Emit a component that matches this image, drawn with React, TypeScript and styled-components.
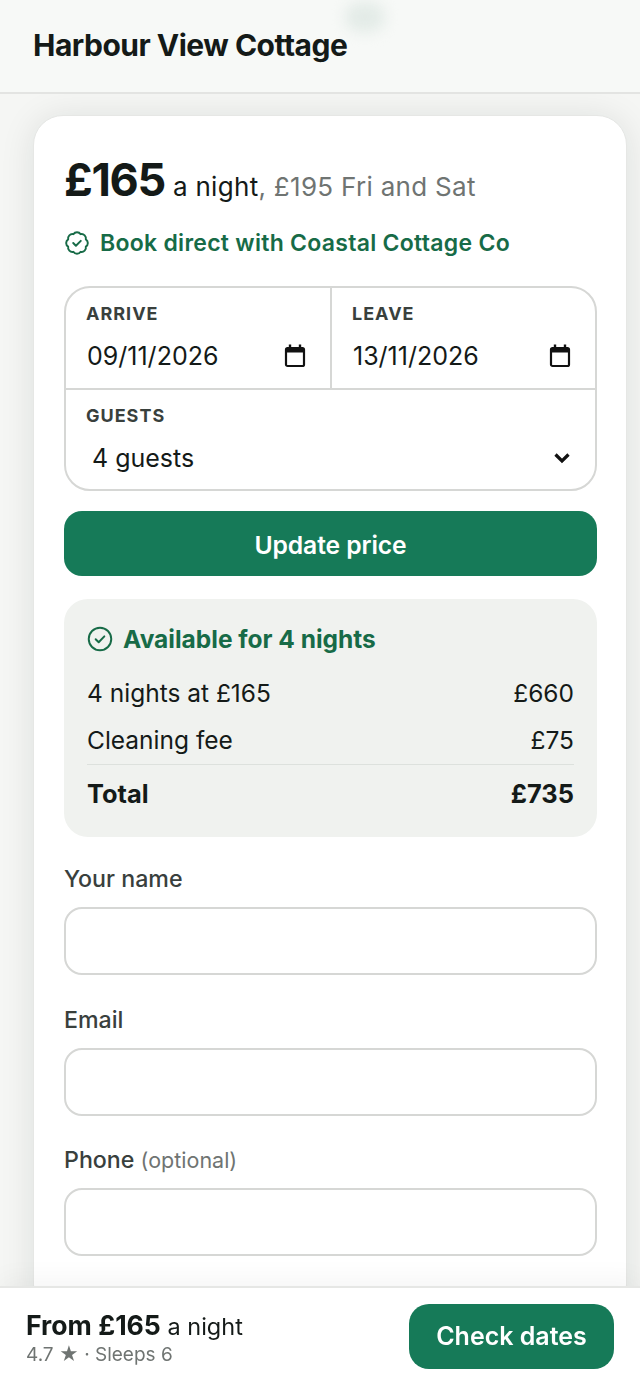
import React from 'react'
import styled, { createGlobalStyle } from 'styled-components'

const GlobalStyle = createGlobalStyle`
    * { box-sizing: border-box; }
    html, body {
        margin: 0;
        height: 1386px;
        overflow: hidden;
        background: #f5f6f4;
        font-family: Inter, "Liberation Sans", sans-serif;
        color: #141a18;
    }
`

const BadgeIcon = () => (
    <svg width="26" height="26" viewBox="0 0 24 24" fill="none" stroke="#176b47" strokeWidth="1.8" strokeLinecap="round" strokeLinejoin="round">
        <path d="M3.85 8.62a4 4 0 0 1 4.78-4.77 4 4 0 0 1 6.74 0 4 4 0 0 1 4.78 4.78 4 4 0 0 1 0 6.74 4 4 0 0 1-4.77 4.78 4 4 0 0 1-6.75 0 4 4 0 0 1-4.78-4.77 4 4 0 0 1 0-6.76Z" />
        <path d="m8.5 12 2.5 2.5 4.5-4.5" />
    </svg>
)

const CircleCheckIcon = () => (
    <svg width="26" height="26" viewBox="0 0 24 24" fill="none" stroke="#176b47" strokeWidth="1.8" strokeLinecap="round" strokeLinejoin="round">
        <circle cx="12" cy="12" r="10.4" />
        <path d="m8 12.2 2.8 2.8 5.2-5.4" />
    </svg>
)

const CalendarIcon = () => (
    <svg width="22" height="24" viewBox="0 0 22 24" fill="none">
        <path d="M6 0.5v4M16 0.5v4" stroke="#111" strokeWidth="2.4" />
        <rect x="2" y="4" width="18" height="18" rx="1.6" stroke="#111" strokeWidth="2.2" />
        <path d="M2 4h18v4.5H2z" fill="#111" />
    </svg>
)

const ChevronIcon = () => (
    <svg width="18" height="12" viewBox="0 0 18 12" fill="none" stroke="#111" strokeWidth="3.2">
        <path d="m2.5 2.5 6.5 6.5 6.5-6.5" />
    </svg>
)

export default function App() {
    return (
        <>
            <GlobalStyle />
            <Header>
                <HeaderBlob />
                <Title>Harbour View Cottage</Title>
            </Header>
            <Main>
                <Card>
                    <PriceLine>
                        <BigPrice>£165</BigPrice>
                        <PerNight>a night</PerNight>
                        <Weekend>, £195 Fri and Sat</Weekend>
                    </PriceLine>
                    <DirectLine>
                        <BadgeIcon />
                        <span>Book direct with Coastal Cottage Co</span>
                    </DirectLine>
                    <DatesBox>
                        <DateCell>
                            <CellLabel>Arrive</CellLabel>
                            <CellValue>
                                <span>09/11/2026</span>
                                <CalendarIcon />
                            </CellValue>
                        </DateCell>
                        <DateCell $divider>
                            <CellLabel>Leave</CellLabel>
                            <CellValue>
                                <span>13/11/2026</span>
                                <CalendarIcon />
                            </CellValue>
                        </DateCell>
                        <GuestsCell>
                            <CellLabel>Guests</CellLabel>
                            <GuestsValue>
                                <span>4 guests</span>
                                <ChevronIcon />
                            </GuestsValue>
                        </GuestsCell>
                    </DatesBox>
                    <UpdateButton>Update price</UpdateButton>
                    <Summary>
                        <Available>
                            <CircleCheckIcon />
                            <span>Available for 4 nights</span>
                        </Available>
                        <SummaryRow>
                            <span>4 nights at £165</span>
                            <span>£660</span>
                        </SummaryRow>
                        <SummaryRow>
                            <span>Cleaning fee</span>
                            <span>£75</span>
                        </SummaryRow>
                        <TotalRow>
                            <span>Total</span>
                            <span>£735</span>
                        </TotalRow>
                    </Summary>
                    <Fields>
                        <Field>
                            <FieldLabel>Your name</FieldLabel>
                            <TextInput />
                        </Field>
                        <Field>
                            <FieldLabel>Email</FieldLabel>
                            <TextInput />
                        </Field>
                        <Field>
                            <FieldLabel>Phone <Optional>(optional)</Optional></FieldLabel>
                            <TextInput />
                        </Field>
                    </Fields>
                </Card>
            </Main>
            <BottomBar>
                <BarInfo>
                    <BarPrice>
                        <strong>From £165</strong> a night
                    </BarPrice>
                    <BarMeta>4.7 ★ · Sleeps 6</BarMeta>
                </BarInfo>
                <CheckButton>Check dates</CheckButton>
            </BottomBar>
        </>
    )
}

const Header = styled.header`
    position: relative;
    display: flex;
    align-items: center;
    height: 94px;
    padding: 0 33px 2px;
    overflow: hidden;
    background: #f7f9f7;
    border-bottom: 2px solid #e3e4e2;
`

const HeaderBlob = styled.div`
    position: absolute;
    top: 2px;
    left: 345px;
    width: 40px;
    height: 30px;
    border-radius: 16px;
    background: #e3ebe7;
    filter: blur(7px);
`

const Title = styled.h1`
    position: relative;
    margin: 0;
    font-size: 30px;
    line-height: 36px;
    font-weight: 700;
    letter-spacing: -0.5px;
    color: #141a18;
`

const Main = styled.main`
    padding: 21px 13px 0 33px;
`

const Card = styled.section`
    height: 1200px;
    padding: 33px 29px 0 30px;
    border: 1px solid #e6e7e5;
    border-radius: 30px;
    background: #fff;
    box-shadow: 0 2px 34px rgba(20, 30, 25, 0.1);
`

const PriceLine = styled.div`
    display: flex;
    align-items: baseline;
    height: 59px;
`

const BigPrice = styled.span`
    font-size: 45px;
    line-height: 62px;
    font-weight: 700;
    letter-spacing: -1.3px;
    color: #141a18;
`

const PerNight = styled.span`
    margin-left: 8px;
    font-size: 26px;
    letter-spacing: 0.3px;
    color: #141a18;
`

const Weekend = styled.span`
    font-size: 26px;
    letter-spacing: 0.3px;
    color: #6f7472;
    white-space: pre;
`

const DirectLine = styled.div`
    display: flex;
    align-items: center;
    gap: 10px;
    height: 34px;
    margin-top: 18px;
    font-size: 23px;
    font-weight: 600;
    letter-spacing: 0.28px;
    color: #176b47;
`

const DatesBox = styled.div`
    display: grid;
    grid-template-columns: 264px 1fr;
    grid-template-rows: 102px 1fr;
    height: 205px;
    margin-top: 26px;
    border: 2px solid #d6d7d5;
    border-radius: 26px;
    overflow: hidden;
`

const DateCell = styled.div<{ $divider?: boolean }>`
    padding: 15px 23px 0 20px;
    border-bottom: 2px solid #d6d7d5;
    border-left: ${p => (p.$divider ? '2px solid #d6d7d5' : 'none')};
`

const GuestsCell = styled.div`
    grid-column: 1 / 3;
    padding: 15px 20px 0;
`

const CellLabel = styled.div`
    font-size: 18px;
    line-height: 22px;
    font-weight: 700;
    letter-spacing: 1px;
    text-transform: uppercase;
    color: #39403d;
`

const CellValue = styled.div`
    display: flex;
    align-items: center;
    justify-content: space-between;
    margin-top: 13px;
    padding: 0 1px;
    font-size: 25px;
    line-height: 36px;
    color: #141a18;
`

const GuestsValue = styled(CellValue)`
    padding: 0 4px 0 6px;
`

const UpdateButton = styled.button`
    display: block;
    width: 100%;
    height: 65px;
    margin-top: 20px;
    padding-top: 3px;
    border: none;
    border-radius: 18px;
    background: #167a58;
    color: #fff;
    font-family: inherit;
    font-size: 24.7px;
    font-weight: 600;
    letter-spacing: -0.1px;
`

const Summary = styled.div`
    height: 238px;
    margin-top: 23px;
    padding: 22px 23px 0;
    border-radius: 24px;
    background: #f0f2ef;
`

const Available = styled.div`
    display: flex;
    align-items: center;
    gap: 10px;
    height: 36px;
    font-size: 24.5px;
    font-weight: 700;
    color: #176b47;
`

const SummaryRow = styled.div`
    display: flex;
    justify-content: space-between;
    align-items: center;
    height: 47px;
    font-size: 24.5px;
    color: #141a18;
    &:nth-child(2) {
        margin-top: 12px;
    }
`

const TotalRow = styled(SummaryRow)`
    height: 58px;
    margin-top: 1px;
    border-top: 1px solid #dde1dd;
    font-size: 25.4px;
    font-weight: 700;
`

const Fields = styled.div`
    display: flex;
    flex-direction: column;
    gap: 28px;
    margin-top: 25px;
`

const Field = styled.label`
    display: block;
    &:last-child {
        margin-top: -1px;
    }
`

const FieldLabel = styled.div`
    height: 34px;
    margin-bottom: 11px;
    font-size: 23.2px;
    line-height: 34px;
    font-weight: 500;
    color: #39403d;
`

const Optional = styled.span`
    font-size: 21.5px;
    font-weight: 400;
    color: #6f7472;
`

const TextInput = styled.input`
    display: block;
    width: 100%;
    height: 68px;
    border: 2px solid #d6d7d5;
    border-radius: 18px;
    background: #fff;
`

const BottomBar = styled.footer`
    position: fixed;
    left: 0;
    right: 0;
    bottom: 0;
    display: flex;
    align-items: center;
    justify-content: space-between;
    height: 100px;
    padding: 0 26px 2px;
    background: #fff;
    border-top: 2px solid #e6e7e5;
    box-shadow: 0 -8px 24px rgba(20, 30, 25, 0.04);
`

const BarInfo = styled.div`
    display: flex;
    flex-direction: column;
`

const BarPrice = styled.div`
    padding-top: 1px;
    font-size: 23.5px;
    line-height: 36px;
    color: #141a18;
    strong {
        font-size: 26.6px;
        font-weight: 700;
    }
`

const BarMeta = styled.div`
    margin-top: -1px;
    font-size: 19px;
    line-height: 22px;
    color: #6f7472;
`

const CheckButton = styled.button`
    width: 205px;
    height: 65px;
    border: none;
    border-radius: 20px;
    background: #167a58;
    color: #fff;
    font-family: inherit;
    font-size: 25px;
    font-weight: 600;
`
